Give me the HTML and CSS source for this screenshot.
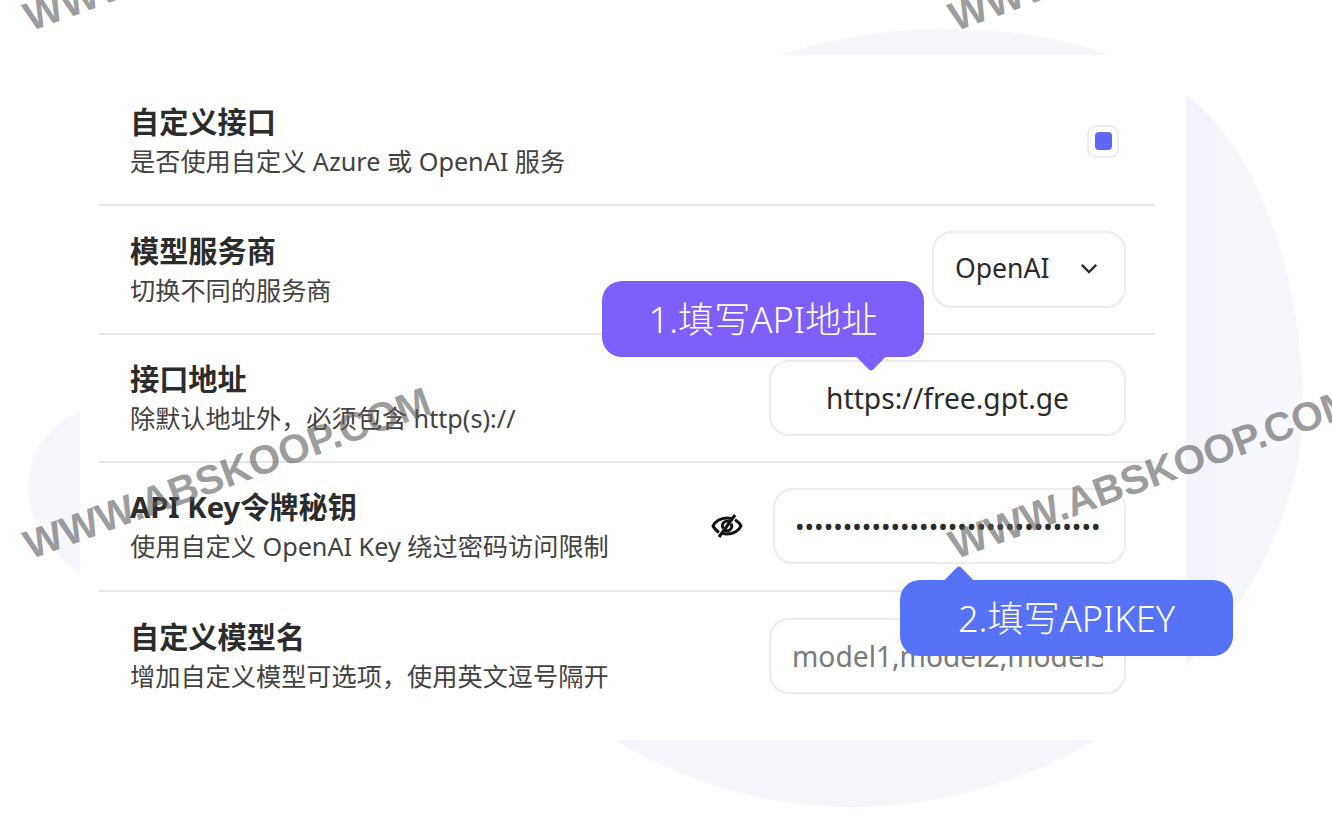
FILE: index.html
```html
<!DOCTYPE html>
<html lang="zh-CN">
<head>
<meta charset="utf-8">
<title>自定义接口设置</title>
<link rel="stylesheet" href="styles.css">
</head>
<body>
<div class="stage">
  <svg class="blob" viewBox="0 0 1332 833" aria-hidden="true">
    <clipPath id="blob-clip">
      <path d="M945 29C1040 29 1125 50 1186 95C1260 150 1303 280 1303 410C1303 480 1270 570 1218 630C1165 690 1130 720 1096 740C1020 785 930 807 855 807C770 807 690 785 615 740C400 700 140 640 80 575C50 550 28 520 28 490C28 450 50 425 80 412C300 300 500 100 780 55C830 40 880 29 945 29Z"/>
    </clipPath>
    <g clip-path="url(#blob-clip)">
      <rect class="blob-fill" x="0" y="0" width="1332" height="833"/>
      <rect class="blob-band" x="1186" y="0" width="30" height="833"/>
    </g>
  </svg>
  <main class="card">
    <section class="list">
      <div class="row">
        <div class="label"><div class="title">自定义接口</div><div class="sub">是否使用自定义 Azure 或 OpenAI 服务</div></div>
        <div class="check"><span class="check-dot"></span></div>
      </div>
      <div class="row">
        <div class="label"><div class="title">模型服务商</div><div class="sub">切换不同的服务商</div></div>
        <div class="select"><span>OpenAI</span>
          <svg class="chevron" viewBox="0 0 20 12"><path d="M2 2l8 8 8-8"/></svg>
        </div>
      </div>
      <div class="row">
        <div class="label"><div class="title">接口地址</div><div class="sub">除默认地址外，必须包含 http(s)://</div></div>
        <input class="field field-center" type="text" value="https://free.gpt.ge">
      </div>
      <div class="row">
        <div class="label"><div class="title">API Key令牌秘钥</div><div class="sub">使用自定义 OpenAI Key 绕过密码访问限制</div></div>
        <div class="pass">
          <svg class="eye" viewBox="0 0 32 26">
            <path d="M8 19.5C5 17.5 3 15 2 13C4 8.5 9.5 5 16 5C17.5 5 19 5.2 20.5 5.7"/>
            <path d="M24 6.8C27 8.6 29 11 30 13C28 17.5 22.5 21 16 21C14.5 21 13 20.8 11.5 20.3"/>
            <path d="M12.2 15.5A4.6 4.6 0 0 1 19 9.4"/>
            <path d="M20 10.8A4.6 4.6 0 0 1 13.5 17"/>
            <path d="M24 2L8 24"/>
          </svg>
          <input class="field field-pass" type="password" value="abcdefghijklmnopqrstuvwxyzabcdef">
        </div>
      </div>
      <div class="row row-last">
        <div class="label"><div class="title">自定义模型名</div><div class="sub">增加自定义模型可选项，使用英文逗号隔开</div></div>
        <input class="field" type="text" placeholder="model1,model2,model3">
      </div>
    </section>
  </main>
  <div class="tip tip-purple">1.填写API地址</div>
  <div class="tip tip-blue">2.填写APIKEY</div>
  <div class="mark mark-a">WWW.ABSKOOP.COM</div>
  <div class="mark mark-b">WWW.ABSKOOP.COM</div>
  <div class="mark mark-c">WWW.ABSKOOP.COM</div>
  <div class="mark mark-d">WWW.ABSKOOP.COM</div>
</div>
</body>
</html>
```
FILE: styles.css
```css
* { box-sizing: border-box; }
html, body { margin: 0; padding: 0; background: #fff; }
body { font-family: "Noto Sans", "Noto Sans CJK SC", sans-serif; color: #303030; }
.stage { position: relative; width: 1332px; height: 833px; overflow: hidden; padding: 55px 146px 93px 80px; }
.blob { position: absolute; left: 0; top: 0; width: 1332px; height: 833px; }
.blob-fill { fill: #f6f6fd; }
.blob-band { fill: #f3f3fb; }
.card { position: relative; height: 685px; background: #fff; padding: 23px 31px 0 19px; }
.list { display: flex; flex-direction: column; }
.row { height: 128.4px; display: flex; align-items: center; justify-content: space-between; padding: 0 29px 0 31px; border-bottom: 2px solid #e8e8ea; }
.row-last { border-bottom: 0; }
.label { padding-top: 2px; }
.title { font-size: 29.2px; font-weight: 700; line-height: 39px; color: #2c2c2c; }
.sub { font-size: 25.2px; line-height: 39px; color: #424242; }
.check { width: 32px; height: 33px; border: 2px solid #eeeef0; border-radius: 9px; background: #fff; display: flex; align-items: center; justify-content: center; margin-right: 7px; }
.check-dot { width: 17px; height: 18px; border-radius: 4px; background: #5f68f5; }
.select { width: 194px; height: 77px; border: 2px solid #ececee; border-radius: 20px; background: #fff; display: flex; align-items: center; justify-content: space-between; padding: 0 26px 3px 21px; font-size: 26.6px; color: #2b2b2b; }
.chevron { width: 18px; height: 11px; }
.chevron path { fill: none; stroke: #2b2b2b; stroke-width: 2.6; }
.field { width: 357px; height: 76px; border: 2px solid #ececee; border-radius: 20px; background: #fff; padding: 0 21px; font-family: "Noto Sans", "Noto Sans CJK SC", sans-serif; font-size: 28.2px; color: #2b2b2b; outline: none; }
.field::placeholder { color: #7a7a7a; opacity: 1; }
.field-center { text-align: center; }
.pass { display: flex; align-items: center; gap: 30px; }
.eye { width: 32px; height: 26px; }
.eye path { fill: none; stroke: #111; stroke-width: 3; }
.field-pass { width: 353px; padding: 0 20px; font-size: 25.4px; }
.tip { position: absolute; height: 76px; border-radius: 20px; color: #fff; display: flex; align-items: center; justify-content: center; padding-bottom: 3px; font-size: 36.2px; font-weight: 300; }
.tip::after { content: ""; position: absolute; width: 22px; height: 22px; border-radius: 3px; background: inherit; transform: rotate(45deg); }
.tip-purple { left: 602px; top: 281px; width: 322px; background: #7f5ffa; }
.tip-purple::after { left: 258px; bottom: -10px; }
.tip-blue { left: 900px; top: 580px; width: 333px; background: #5672f7; }
.tip-blue::after { left: 48px; top: -10px; }
.mark { position: absolute; font-family: "Liberation Sans", sans-serif; font-weight: 700; font-size: 40.5px; line-height: 44px; color: rgba(90, 90, 90, 0.6); white-space: nowrap; transform: rotate(-20deg); transform-origin: 0 100%; }
.mark-a { left: 33px; top: 523px; }
.mark-b { left: 958px; top: 523px; }
.mark-c { left: 33px; top: -5px; }
.mark-d { left: 958px; top: -5px; }
```
